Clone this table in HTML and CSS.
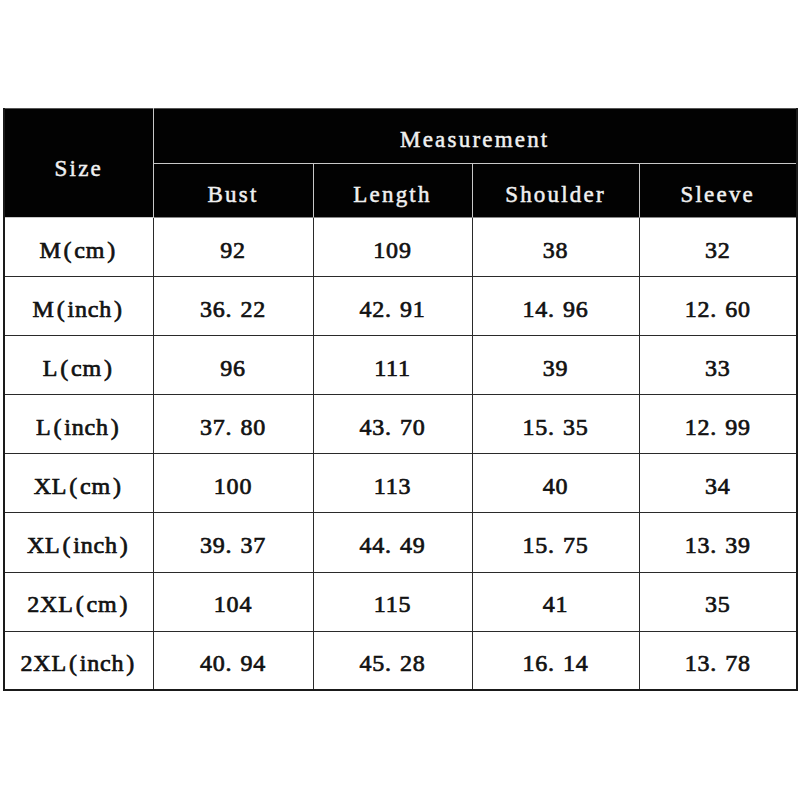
FILE: index.html
```html
<!DOCTYPE html>
<html>
<head>
<meta charset="utf-8">
<link rel="stylesheet" href="styles.css">
</head>
<body>
<div class="page">
<table class="size-table">
  <colgroup>
    <col class="c-size"><col class="c-bust"><col class="c-length"><col class="c-shoulder"><col class="c-sleeve">
  </colgroup>
  <thead>
    <tr class="h1">
      <th rowspan="2" class="size-head">Size</th>
      <th colspan="4">Measurement</th>
    </tr>
    <tr class="h2">
      <th>Bust</th><th>Length</th><th>Shoulder</th><th>Sleeve</th>
    </tr>
  </thead>
  <tbody>
    <tr><td>M<span class="p">(</span>cm<span class="p">)</span></td><td>92</td><td>109</td><td>38</td><td>32</td></tr>
    <tr><td>M<span class="p">(</span>inch<span class="p">)</span></td><td>36<span class="d">.</span>22</td><td>42<span class="d">.</span>91</td><td>14<span class="d">.</span>96</td><td>12<span class="d">.</span>60</td></tr>
    <tr><td>L<span class="p">(</span>cm<span class="p">)</span></td><td>96</td><td>111</td><td>39</td><td>33</td></tr>
    <tr><td>L<span class="p">(</span>inch<span class="p">)</span></td><td>37<span class="d">.</span>80</td><td>43<span class="d">.</span>70</td><td>15<span class="d">.</span>35</td><td>12<span class="d">.</span>99</td></tr>
    <tr><td>XL<span class="p">(</span>cm<span class="p">)</span></td><td>100</td><td>113</td><td>40</td><td>34</td></tr>
    <tr><td>XL<span class="p">(</span>inch<span class="p">)</span></td><td>39<span class="d">.</span>37</td><td>44<span class="d">.</span>49</td><td>15<span class="d">.</span>75</td><td>13<span class="d">.</span>39</td></tr>
    <tr><td>2XL<span class="p">(</span>cm<span class="p">)</span></td><td>104</td><td>115</td><td>41</td><td>35</td></tr>
    <tr><td>2XL<span class="p">(</span>inch<span class="p">)</span></td><td>40<span class="d">.</span>94</td><td>45<span class="d">.</span>28</td><td>16<span class="d">.</span>14</td><td>13<span class="d">.</span>78</td></tr>
  </tbody>
</table>
</div>
</body>
</html>
```

FILE: styles.css
```css
html, body {
  margin: 0;
  padding: 0;
  background: #ffffff;
}
.page {
  padding: 108px 0 0 3px;
}
.size-table {
  border-collapse: collapse;
  table-layout: fixed;
  width: 794px;
  border: 2px solid #1a1a1a;
  border-top: 1px solid #555;
}
.c-size { width: 149px; }
.c-bust { width: 160px; }
.c-length { width: 159px; }
.c-shoulder { width: 167px; }
.c-sleeve { width: 158px; }

thead th {
  background: #020202;
  color: #f0f0f0;
  font-family: "Liberation Serif", serif;
  font-weight: normal;
  font-size: 23px;
  letter-spacing: 2.2px;
  -webkit-text-stroke: 0.5px #f0f0f0;
  border: 1px solid #c8c8c8;
  padding: 8px 0 0 0;
  text-align: center;
  vertical-align: middle;
}
thead th.size-head {
  border-left: none;
  border-top: none;
  padding-top: 11px;
}
.h1 th { border-top: none; }
.h1 { height: 55px; }
.h2 { height: 54px; }
.h2 th { border-bottom: 1px solid #888; }
.h2 th:last-child, .h1 th:last-child { border-right: none; }

tbody tr { height: 59.1px; }
tbody td {
  font-family: "Liberation Serif", serif;
  font-weight: normal;
  font-size: 24px;
  color: #121212;
  -webkit-text-stroke: 0.7px #121212;
  text-align: center;
  vertical-align: middle;
  border: 1px solid #2a2a2a;
  padding: 6px 0 0 0;
  letter-spacing: 0.8px;
}
.p {
  margin: 0 2px;
}
.d {
  margin-right: 8px;
}
```
